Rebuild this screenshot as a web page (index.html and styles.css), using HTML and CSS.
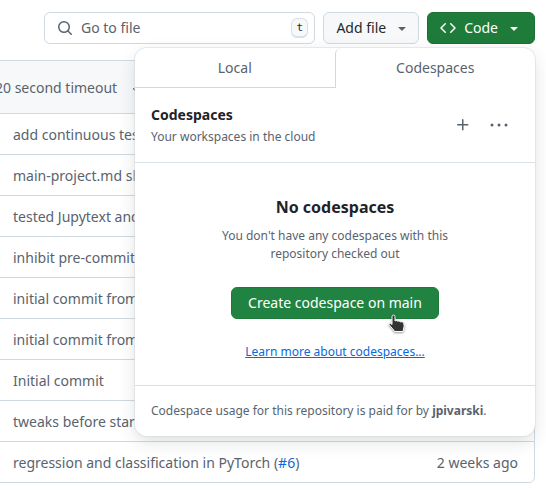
FILE: index.html
```
<!DOCTYPE html>
<html lang="en">
<head>
<meta charset="utf-8">
<title>Repository files</title>
<link rel="stylesheet" href="styles.css">
</head>
<body>
<header class="toolbar">
  <label class="search">
    <svg class="icon" viewBox="0 0 16 16" aria-hidden="true"><path d="M10.68 11.74a6 6 0 0 1-7.922-8.982 6 6 0 0 1 8.982 7.922l3.04 3.04a.749.749 0 0 1-.326 1.275.749.749 0 0 1-.734-.215ZM11.5 7a4.499 4.499 0 1 0-8.997 0A4.499 4.499 0 0 0 11.5 7Z"/></svg>
    <input class="search-input" type="text" placeholder="Go to file" aria-label="Go to file">
    <kbd class="key">t</kbd>
  </label>
  <button class="btn" type="button">Add file
    <svg class="icon caret" viewBox="0 0 16 16" aria-hidden="true"><path d="m4.427 7.427 3.396 3.396a.25.25 0 0 0 .354 0l3.396-3.396A.25.25 0 0 0 11.396 7H4.604a.25.25 0 0 0-.177.427Z"/></svg>
  </button>
  <div class="code-menu">
    <button class="btn primary pressed" type="button" aria-expanded="true">
      <svg class="icon" viewBox="0 0 16 16" aria-hidden="true"><path d="m11.28 3.22 4.25 4.25a.75.75 0 0 1 0 1.06l-4.25 4.25a.749.749 0 0 1-1.275-.326.749.749 0 0 1 .215-.734L13.94 8l-3.72-3.72a.749.749 0 0 1 .326-1.275.749.749 0 0 1 .734.215Zm-6.56 0a.751.751 0 0 1 1.042.018.751.751 0 0 1 .018 1.042L2.06 8l3.72 3.72a.749.749 0 0 1-.326 1.275.749.749 0 0 1-.734-.215L.47 8.53a.75.75 0 0 1 0-1.06Z"/></svg>
      <span>Code</span>
      <svg class="icon caret" viewBox="0 0 16 16" aria-hidden="true"><path d="m4.427 7.427 3.396 3.396a.25.25 0 0 0 .354 0l3.396-3.396A.25.25 0 0 0 11.396 7H4.604a.25.25 0 0 0-.177.427Z"/></svg>
    </button>
    <section class="popover" aria-label="Codespaces">
      <div class="tabs" role="tablist">
        <button class="tab" type="button" role="tab" aria-selected="false">Local</button>
        <button class="tab" type="button" role="tab" aria-selected="true">Codespaces</button>
      </div>
      <div class="pop-head">
        <div class="pop-title">
          <h2 class="title">Codespaces</h2>
          <p class="note">Your workspaces in the cloud</p>
        </div>
        <button class="icon-btn" type="button" aria-label="Create a codespace"><svg class="icon" viewBox="0 0 16 16" aria-hidden="true"><path d="M7.75 2a.75.75 0 0 1 .75.75V7h4.25a.75.75 0 0 1 0 1.5H8.5v4.25a.75.75 0 0 1-1.5 0V8.5H2.75a.75.75 0 0 1 0-1.5H7V2.75A.75.75 0 0 1 7.75 2Z"/></svg></button>
        <button class="icon-btn" type="button" aria-label="More options"><svg class="icon wide" viewBox="0 0 18 16" aria-hidden="true"><circle cx="2" cy="8" r="1.5"/><circle cx="9" cy="8" r="1.5"/><circle cx="16" cy="8" r="1.5"/></svg></button>
      </div>
      <div class="blank">
        <h3 class="blank-title">No codespaces</h3>
        <p class="note blank-text">You don't have any codespaces with this repository checked out</p>
        <div class="create">
          <button class="btn primary" type="button">Create codespace on main</button>
          <svg class="pointer" viewBox="0 0 18 20" aria-hidden="true"><path d="M4 2.500C4 .6 7 .6 7 2.500V7c1-.8 2.300-.5 2.600.3 1-.6 2.200-.3 2.600.6 1.200-.5 3.300.1 3.500 1.300l.5 2.800-1.200 5.500H6.500C5.500 15 3 13.500 1.200 10.800.6 9.700 1.900 8.800 2.900 9.500L4 10.500Z"/></svg>
        </div>
        <a class="learn" href="#learn">Learn more about codespaces...</a>
      </div>
      <p class="note pop-foot">Codespace usage for this repository is paid for by <strong>jpivarski</strong>.</p>
    </section>
  </div>
</header>
<main class="files">
  <div class="latest">
    <span>20 second timeout</span>
    <svg class="icon check" viewBox="0 0 16 16" aria-hidden="true"><path d="M13.780 4.220a.75.75 0 0 1 0 1.060l-7.250 7.250a.75.75 0 0 1-1.060 0L2.220 9.280a.751.751 0 0 1 .018-1.042.751.751 0 0 1 1.042-.018L6 10.940l6.720-6.720a.75.75 0 0 1 1.060 0Z"/></svg>
  </div>
  <table class="list">
    <tbody>
      <tr><td>add continuous tests</td><td></td></tr>
      <tr><td>main-project.md sl</td><td></td></tr>
      <tr><td>tested Jupytext and</td><td></td></tr>
      <tr><td>inhibit pre-commit</td><td></td></tr>
      <tr><td>initial commit from</td><td></td></tr>
      <tr><td>initial commit from</td><td></td></tr>
      <tr><td>Initial commit</td><td></td></tr>
      <tr><td>tweaks before start</td><td></td></tr>
      <tr><td>regression and classification in PyTorch (<a class="issue" href="#6">#6</a>)</td><td class="age">2 weeks ago</td></tr>
    </tbody>
  </table>
</main>
</body>
</html>
```
FILE: styles.css
```
* { box-sizing: border-box; }

body {
  margin: 0;
  background: #fff;
  color: #59636e;
  font: 14px/20px "Noto Sans", sans-serif;
  overflow: hidden;
}

h2, h3, p { margin: 0; }
button, input { font: inherit; }

.icon {
  width: 16px;
  height: 16px;
  flex: none;
  fill: currentColor;
}

.wide { width: 18px; }

.toolbar {
  display: flex;
  gap: 8px;
  padding: 12px 11px 16px 44px;
}

.search {
  flex: 1;
  min-width: 0;
  height: 32px;
  display: flex;
  align-items: center;
  gap: 8px;
  padding: 0 6px 0 12px;
  border: 1px solid #d1d9e0;
  border-radius: 6px;
}

.search-input {
  flex: 1;
  min-width: 0;
  padding: 0;
  border: 0;
  outline: 0;
  background: none;
  color: #25292e;
}

.search-input::placeholder { color: #59636e; opacity: 1; }

.key {
  width: 17px;
  height: 20px;
  border: 1px solid #d9dfe5;
  border-bottom-width: 2px;
  border-radius: 6px;
  background: #f6f8fa;
  color: #25292e;
  font: 11px/18px "DejaVu Sans Mono", monospace;
  text-align: center;
}

.btn {
  height: 32px;
  display: flex;
  align-items: center;
  gap: 8px;
  padding: 0 8px 0 12px;
  border: 1px solid #d1d9e0;
  border-radius: 6px;
  background: #f6f8fa;
  color: #25292e;
  white-space: nowrap;
}

.caret { color: #59636e; }

.primary {
  border-color: #1f7a3a;
  background: #218341;
  color: #fff;
}

.pressed { padding-right: 12px; background: #1e7b39; border-color: #1d7035; }
.primary .caret { color: #fff; }

.code-menu { position: relative; }

.popover {
  position: absolute;
  z-index: 1;
  top: 36px;
  right: 0;
  width: 400px;
  border-radius: 12px;
  background: #fff;
  box-shadow: 0 0 0 1px #d1d9e080, 0 6px 12px -3px #25292e0a, 0 6px 18px 0 #25292e1f;
}

.tabs { display: flex; }

.tab {
  flex: 1;
  height: 40px;
  padding: 0;
  border: 0;
  border-bottom: 1px solid #d1d9e0;
  background: none;
  color: #59636e;
}

.tab[aria-selected="true"] {
  border-bottom: 0;
  border-left: 1px solid #d1d9e0;
  border-top-left-radius: 6px;
}

.pop-head {
  display: flex;
  align-items: center;
  padding: 16px 18px 16px 16px;
  border-bottom: 1px solid #d9e0e6;
}

.pop-title {
  flex: 1;
  display: grid;
  gap: 2px;
}

.title {
  color: #1f2328;
  font-size: 14px;
  line-height: 22px;
}

.note { font-size: 12px; line-height: 18px; }

.icon-btn {
  width: 36px;
  height: 32px;
  display: flex;
  align-items: center;
  justify-content: center;
  padding: 0;
  border: 0;
  background: none;
  color: #59636e;
}

.blank {
  display: flex;
  flex-direction: column;
  align-items: center;
  padding: 32px 80px 24px;
  text-align: center;
}

.blank-title {
  color: #1f2328;
  font-size: 16px;
  line-height: 24px;
}

.blank-text { margin-top: 8px; }

.create {
  position: relative;
  margin: 24px 0;
}

.create .btn { padding: 0 16px; }

.pointer {
  position: absolute;
  right: 33px;
  bottom: -15px;
  width: 18px;
  height: 20px;
  fill: #333;
  stroke: #fff;
  filter: drop-shadow(0 1px 1px #0006);
}

.learn {
  color: #0969da;
  font-size: 12px;
  line-height: 18px;
}

.pop-foot {
  padding: 16px;
  border-top: 1px solid #d9e0e6;
}

.files {
  margin: 0 11px 0 -12px;
  border: 1px solid #d1d9e0;
  border-radius: 6px;
}

.latest {
  height: 52px;
  display: flex;
  align-items: center;
  gap: 14px;
  padding: 2px 0 0 6px;
  background: #f6f8fa;
}

.check { color: #1a7f37; }

.list {
  width: 100%;
  border-spacing: 0;
}

.list td {
  height: 41px;
  padding: 2px 16px 0 24px;
  border-top: 1px solid #d1d9e0;
  white-space: nowrap;
}

.list .age { text-align: right; }

.issue { color: #0969da; text-decoration: none; }
```
